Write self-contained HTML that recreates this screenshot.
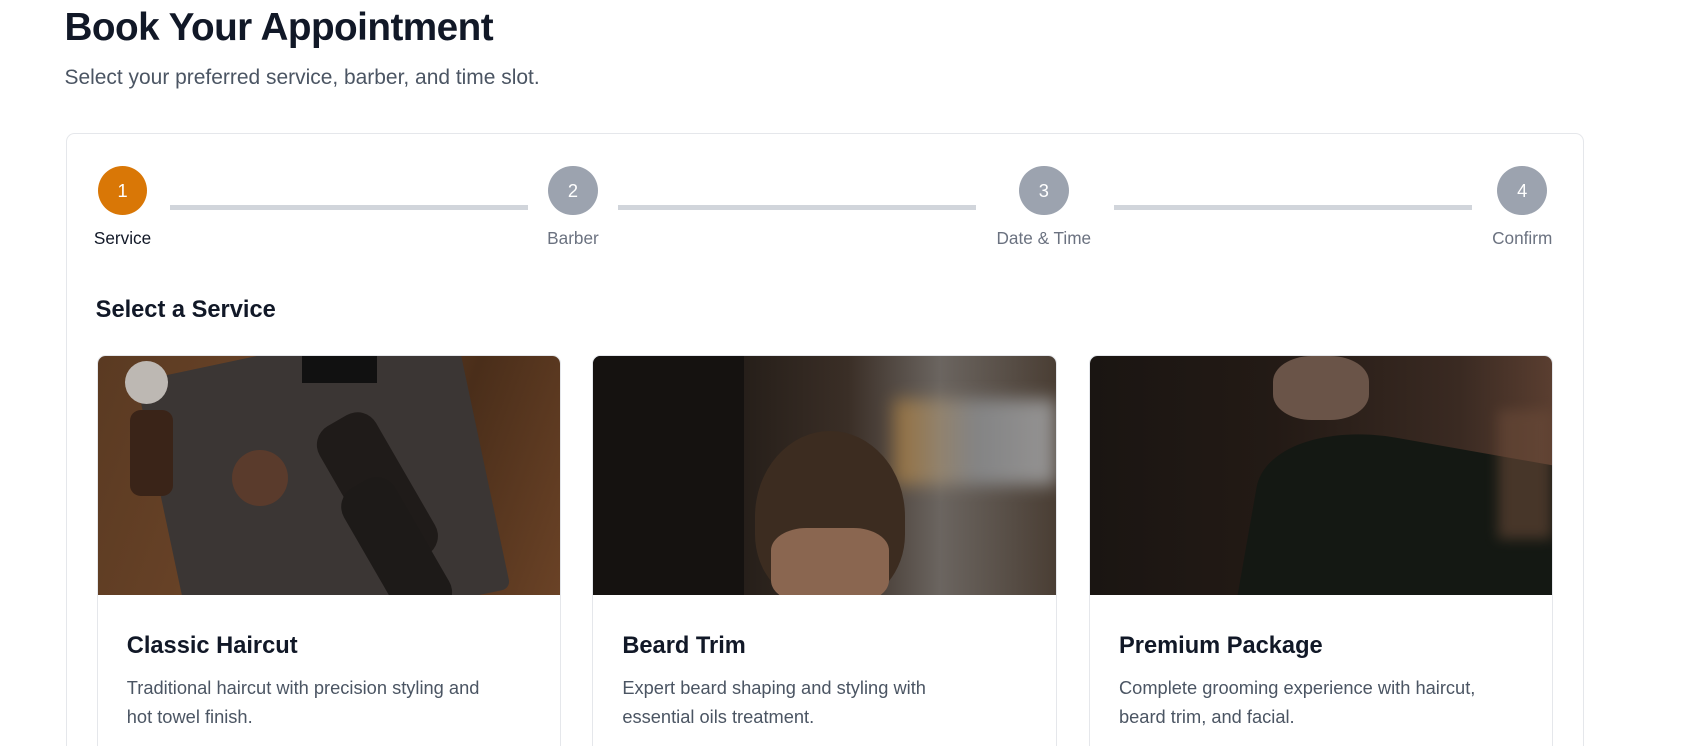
<!DOCTYPE html>
<html><head><meta charset="utf-8"><style>
html{zoom:1.075;overflow:hidden;height:694px}
body{margin:0;background:#fff;font-family:"Liberation Sans",sans-serif;width:1568px;height:694px;overflow:hidden;position:relative;color:#111827}
.a{position:absolute}
h1{position:absolute;left:60px;top:6px;margin:0;font-size:36px;font-weight:900;letter-spacing:-0.5px;color:#111827}
.sub{left:60px;top:61px;font-size:19.5px;color:#4b5563}
.card{left:61px;top:124px;width:1411px;height:572px;border:1px solid #e5e7eb;border-bottom:0;border-radius:8px 8px 0 0}
.c{width:46px;height:46px;border-radius:50%;background:#9ca3af;color:#fff;font-size:17px;text-align:center;line-height:46px;top:154px}
.l{top:191px;height:4px;background:#d1d5db}
.lab{top:212px;font-size:16px;color:#6b7280;transform:translateX(-50%)}
.sc{top:330px;width:430px;height:364px;border:1px solid #e5e7eb;border-bottom:0;border-radius:8px 8px 0 0;overflow:hidden}
.img{height:223px;position:relative;overflow:hidden}
.sc h3{margin:35px 0 0 27px;font-size:22px;font-weight:700;color:#111827}
.sc p{margin:12px 0 0 27px;font-size:17px;line-height:27px;color:#4b5563;width:350px}
</style></head><body>
<h1>Book Your Appointment</h1>
<div class="a sub">Select your preferred service, barber, and time slot.</div>
<div class="a card"></div>
<div class="a c" style="left:91px;background:#d97706">1</div>
<div class="a c" style="left:510px">2</div>
<div class="a c" style="left:948px">3</div>
<div class="a c" style="left:1393px">4</div>
<div class="a l" style="left:158px;width:333px"></div>
<div class="a l" style="left:575px;width:333px"></div>
<div class="a l" style="left:1036px;width:333px"></div>
<div class="a lab" style="left:114px;color:#111827">Service</div>
<div class="a lab" style="left:533px">Barber</div>
<div class="a lab" style="left:971px">Date &amp; Time</div>
<div class="a lab" style="left:1416px">Confirm</div>
<div class="a" style="left:89px;top:276px;font-size:22px;font-weight:700">Select a Service</div>

<div class="a sc" style="left:90px">
 <div class="img" style="background:linear-gradient(110deg,#5a3a22,#6b4428 40%,#4a2e1a 70%,#6a4226)">
  <div class="a" style="left:60px;top:-10px;width:300px;height:260px;background:#3b3634;transform:rotate(-12deg);border-radius:8px"></div>
  <div class="a" style="left:230px;top:50px;width:60px;height:150px;background:#1f1b19;transform:rotate(-30deg);border-radius:20px"></div>
  <div class="a" style="left:250px;top:110px;width:55px;height:140px;background:#1d1a18;transform:rotate(-30deg);border-radius:20px"></div>
  <div class="a" style="left:125px;top:88px;width:52px;height:52px;background:#5a3b2c;border-radius:50%"></div>
  <div class="a" style="left:30px;top:50px;width:40px;height:80px;background:#3a2418;border-radius:10px"></div>
  <div class="a" style="left:25px;top:5px;width:40px;height:40px;background:#bdb8b3;border-radius:50%"></div>
  <div class="a" style="left:190px;top:-5px;width:70px;height:30px;background:#111"></div>
 </div>
 <h3>Classic Haircut</h3>
 <p>Traditional haircut with precision styling and hot towel finish.</p>
</div>
<div class="a sc" style="left:551px">
 <div class="img" style="background:linear-gradient(90deg,#1a1714 0%,#241d18 30%,#3a2e26 55%,#6b6560 75%,#4a3e34 100%)">
  <div class="a" style="left:280px;top:40px;width:150px;height:80px;background:linear-gradient(90deg,#c28a3a,#9aa0a6,#c8cdd2);filter:blur(8px);opacity:.6"></div>
  <div class="a" style="left:150px;top:70px;width:140px;height:160px;background:#3c2c20;border-radius:50% 50% 40% 40%"></div>
  <div class="a" style="left:165px;top:160px;width:110px;height:70px;background:#8a6650;border-radius:30%"></div>
  <div class="a" style="left:0;top:0;width:140px;height:223px;background:#151210"></div>
 </div>
 <h3>Beard Trim</h3>
 <p>Expert beard shaping and styling with essential oils treatment.</p>
</div>
<div class="a sc" style="left:1013px">
 <div class="img" style="background:linear-gradient(90deg,#1a1512 0%,#231a15 40%,#3a2a22 80%,#5a3e30 100%)">
  <div class="a" style="left:150px;top:80px;width:300px;height:170px;background:#141813;border-radius:40% 0 0 0;transform:rotate(10deg)"></div>
  <div class="a" style="left:170px;top:0px;width:90px;height:60px;background:#6a5448;border-radius:40%"></div>
  <div class="a" style="left:380px;top:50px;width:50px;height:120px;background:#6a4a38;filter:blur(6px);opacity:.6"></div>
 </div>
 <h3>Premium Package</h3>
 <p>Complete grooming experience with haircut, beard trim, and facial.</p>
</div>
</body></html>
